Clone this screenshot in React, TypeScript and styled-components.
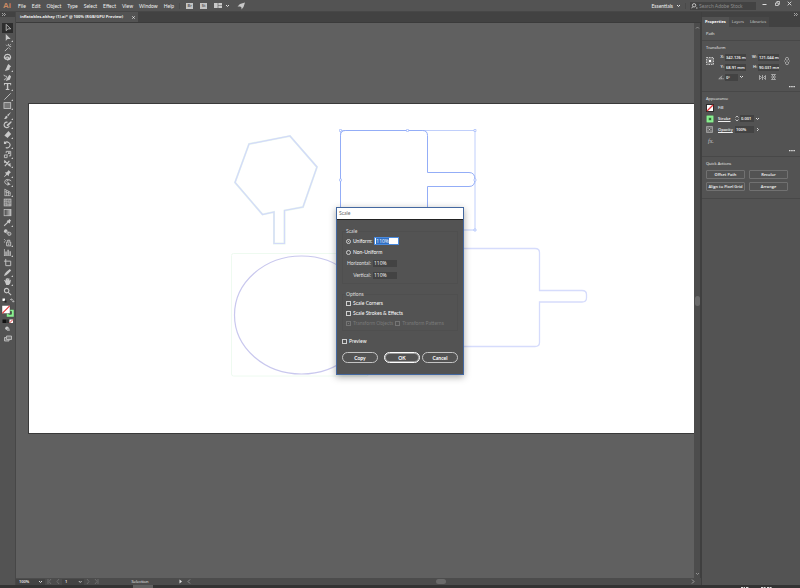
import React, { useEffect, useRef } from "react";
import styled, { createGlobalStyle } from "styled-components";

const GlobalStyle = createGlobalStyle`
  * { box-sizing: border-box; }
  body { margin: 0; background: #606060; overflow: hidden; font-family: Lato, "Open Sans", sans-serif; }
  button, input, select, fieldset, legend { font: inherit; color: inherit; margin: 0; padding: 0; border: 0; background: none; min-width: 0; }
  button { cursor: pointer; }
`;

const Shell = styled.div`
  min-height: 100vh;
  display: grid;
  grid-template-rows: 12px 1fr 3px;
  font-size: 5px;
  line-height: 6px;
  color: #f0f0f0;
`;

/* ---------- top bar ---------- */

const TopBar = styled.header`
  display: flex;
  align-items: center;
  background: #535353;
  border-bottom: 1px solid #474747;
  white-space: nowrap;
`;

const Logo = styled.div`
  width: 15px;
  padding-left: 3px;
  font: 700 8px/10px "Liberation Sans", sans-serif;
  color: #c98a63;
`;

const Menu = styled.nav`
  display: flex;
  gap: 6px;
  padding: 0 5px 0 3px;
  border-right: 1px solid #4a4a4a;
`;

const MenuButton = styled.button`
  line-height: 6px;
  font-size: 5px;
`;

const AppTools = styled.div`
  display: flex;
  align-items: center;
  gap: 7px;
  padding-left: 6px;
`;

const AppBadge = styled.button`
  width: 7px;
  height: 6px;
  background: #c4c4c4;
  color: #535353;
  font-size: 4px;
  line-height: 6px;
  font-weight: 700;
  text-align: center;
`;

const IconButton = styled.button`
  display: flex;
  align-items: center;
  gap: 3px;
`;

const Workspace = styled.div`
  margin-left: auto;
  display: flex;
  align-items: center;
`;

const WorkspaceButton = styled.button`
  display: flex;
  align-items: center;
  gap: 3px;
  padding-right: 4px;
  border-right: 1px solid #4a4a4a;
`;

const SearchBox = styled.label`
  display: flex;
  align-items: center;
  gap: 1px;
  margin-left: 4px;
  padding-left: 1px;
  width: 66px;
  height: 8px;
  background: #434343;
  input { flex: 1; width: 0; line-height: 6px; outline: 0; }
  input::placeholder { color: #8c8c8c; opacity: 1; }
`;

const WindowButtons = styled.div`
  display: flex;
  align-items: center;
  justify-content: space-between;
  width: 30px;
  margin: 0 8px 4px 6px;
`;

/* ---------- main split ---------- */

const Main = styled.main`
  display: grid;
  grid-template-columns: 16px 1fr 99px;
  font-family: "Open Sans", "Noto Sans", sans-serif;
`;

const ToolBar = styled.aside`
  background: #535353;
  border-right: 1px solid #474747;
  display: flex;
  flex-direction: column;
  align-items: center;
  gap: 1px;
`;

const ToolHead = styled.div`
  align-self: stretch;
  height: 10px;
  padding: 1px 0 0 2px;
  background: linear-gradient(#424242 5px, #535353 5px);
  display: flex;
`;

const ToolGroup = styled.div<{ $height: number }>`
  height: ${(p) => p.$height}px;
  display: flex;
  flex-direction: column;
`;

const ToolButton = styled.button<{ $active?: boolean }>`
  flex: 1;
  min-height: 0;
  width: 11px;
  display: flex;
  align-items: center;
  justify-content: center;
  background: ${(p) => (p.$active ? "#2d2d2d" : "transparent")};
  svg { flex: none; }
`;

const Document = styled.section`
  display: grid;
  grid-template-rows: 11px 1fr 7px;
  min-width: 0;
`;

const TabStrip = styled.div`
  display: flex;
  background: #424242;
  border-bottom: 1px solid #3b3b3b;
`;

const DocTab = styled.div`
  display: flex;
  align-items: center;
  gap: 9px;
  padding: 0 3px 0 4px;
  background: #535353;
  font-size: 4px;
  font-weight: 700;
  color: #f0f0f0;
  white-space: nowrap;
`;

const Viewport = styled.div`
  display: grid;
  grid-template-columns: 1fr 7px;
`;

const Canvas = styled.div`
  background: #606060;
  padding: 81px 0 0 13px;
`;

const Artboard = styled.div`
  background: #fff;
  outline: 1px solid #3a3a3a;
  svg { display: block; width: 100%; height: auto; }
`;

const VScroll = styled.div`
  background: #4c4c4c;
  border-right: 1px solid #3f3f3f;
  display: flex;
  flex-direction: column;
  align-items: center;
  justify-content: space-between;
  padding: 2px 0;
`;

const Thumb = styled.div<{ $wide?: boolean }>`
  width: ${(p) => (p.$wide ? 10 : 5)}px;
  height: ${(p) => (p.$wide ? 5 : 10)}px;
  border-radius: 3px;
  background: #6a6a6a;
`;

const StatusBar = styled.footer`
  display: flex;
  align-items: center;
  background: #4c4c4c;
  font-size: 4px;
  line-height: 6px;
  font-weight: 600;
`;

const StatusField = styled.label<{ $width: number }>`
  width: ${(p) => p.$width}px;
  display: flex;
  align-items: center;
  justify-content: space-between;
  padding: 0 2px 0 3px;
  background: #434343;
  input { width: 14px; line-height: 6px; }
`;

const StatusNav = styled.div`
  display: flex;
  align-items: center;
  justify-content: space-around;
  width: 17px;
`;

const StatusText = styled.div`
  width: 78px;
  text-align: center;
  font-weight: 400;
`;

const HScroll = styled.div`
  flex: 1;
  display: flex;
  align-items: center;
  justify-content: space-between;
  padding: 0 6px 0 4px;
`;

const TaskBar = styled.div`
  display: flex;
  justify-content: space-between;
  background: #333;
  padding: 0 27px 0 133px;
  overflow: hidden;
`;

const TaskItem = styled.div`
  width: 20px;
  background: #606060;
`;

/* ---------- properties panel ---------- */

const Panel = styled.aside`
  display: flex;
  flex-direction: column;
  background: #535353;
  border-left: 1px solid #3f3f3f;
  font-size: 4px;
  line-height: 6px;
  font-weight: 600;
`;

const PanelHead = styled.div`
  height: 5px;
  display: flex;
  justify-content: flex-end;
  padding: 1px 2px 0;
  background: #424242;
`;

const PanelTabs = styled.div`
  display: flex;
  height: 10px;
  background: #424242;
`;

const PanelTab = styled.button<{ $active?: boolean }>`
  padding: 0 3px;
  background: ${(p) => (p.$active ? "#535353" : "#484848")};
  color: ${(p) => (p.$active ? "#fff" : "#d4d4d4")};
  font-weight: ${(p) => (p.$active ? 700 : 400)};
`;

const PanelSection = styled.section<{ $height: number }>`
  min-height: ${(p) => p.$height}px;
  padding: 4px 4px 0;
  border-bottom: 1px solid #484848;
`;

const Heading = styled.h2`
  margin: 0;
  font: inherit;
  font-weight: 400;
  color: #f0f0f0;
`;

const TransformGrid = styled.div`
  display: grid;
  grid-template-columns: 11px 1fr 12px;
  align-items: start;
  padding-top: 2px;
  > svg { margin-top: 4px; }
`;

const FieldGrid = styled.div`
  display: grid;
  grid-template-columns: 33px 1fr;
  grid-auto-rows: 8px;
  row-gap: 2px;
`;

const Field = styled.label`
  display: flex;
  align-items: center;
  gap: 1px;
  span, > svg { flex: none; width: 7px; text-align: right; }
  input { flex: none; width: 21px; height: 7px; padding-left: 1px; background: #434343; color: #fff; }
`;

const AngleField = styled(Field)`
  input { width: 13px; }
  > svg:last-child { width: 5px; }
`;

const FlipTools = styled.div`
  display: flex;
  align-items: center;
  gap: 5px;
  padding-left: 9px;
`;

const MoreButton = styled.button`
  display: block;
  margin: 3px 1px 0 auto;
  height: 5px;
  svg { display: block; }
`;

const StyleRow = styled.div`
  display: grid;
  grid-template-columns: 12px 17px 1fr;
  align-items: center;
  height: 11px;
`;

const PaintSwatch = styled.button`
  width: 8px;
  height: 8px;
  svg { display: block; }
`;

const TextLink = styled.a`
  color: #f0f0f0;
  text-decoration: underline;
`;

const NumberBox = styled.div<{ $lead?: boolean }>`
  display: flex;
  align-items: center;
  gap: 1px;
  input { width: ${(p) => (p.$lead ? 14 : 19)}px; height: 7px; padding-left: 1px; background: #434343; color: #fff; }
`;

const Fx = styled.button`
  display: block;
  margin: 2px 0 0 2px;
  height: 8px;
  font: italic 6px/8px "Liberation Serif", serif;
  color: #c8c8c8;
`;

const ActionGrid = styled.div`
  display: grid;
  grid-template-columns: 1fr 1fr;
  gap: 3px 4px;
  padding: 3px 8px 0 0;
`;

const ActionButton = styled.button`
  height: 9px;
  border: 1px solid #717171;
  border-radius: 1px;
  color: #f4f4f4;
  white-space: nowrap;
  line-height: 6px;
`;

/* ---------- scale dialog ---------- */

const Dialog = styled.form`
  position: absolute;
  top: 207px;
  left: calc(50% - 64px);
  width: 128px;
  border: 1px solid #4468a0;
  background: #535353;
  box-shadow: 0 2px 7px rgba(0, 0, 0, 0.35);
  font-size: 5px;
  line-height: 6px;
`;

const DialogTitle = styled.h1`
  margin: 0;
  padding-left: 2px;
  height: 12px;
  background: #fff;
  border-bottom: 1px solid #222;
  color: #666;
  font: inherit;
  line-height: 11px;
`;

const DialogBody = styled.div`
  padding: 8px 5px 11px;
`;

const Group = styled.fieldset`
  && {
    display: flow-root;
    border: 1px solid #4f4f4f;
    padding: 1px 3px 2px;
    margin-bottom: 7px;
  }
  legend { color: #dcdcdc; line-height: 6px; }
`;

const FormRow = styled.div<{ $tall?: boolean }>`
  display: flex;
  align-items: center;
  gap: 2px;
  height: ${(p) => (p.$tall ? 12 : 10)}px;
`;

const Choice = styled.label<{ $muted?: boolean }>`
  display: flex;
  align-items: center;
  gap: 2px;
  white-space: nowrap;
  color: ${(p) => (p.$muted ? "#7a7a7a" : "#fff")};
  input {
    appearance: none;
    flex: none;
    width: 5px;
    height: 5px;
    border: 1px solid ${(p) => (p.$muted ? "#757575" : "#cfcfcf")};
  }
  input[type="radio"] { border-radius: 50%; }
  input:checked { background: ${(p) => (p.$muted ? "#757575" : "#f0f0f0")}; background-clip: content-box; padding: 1px; }
`;

const AxisLabel = styled.label`
  width: 25px;
  text-align: right;
  color: #e0e0e0;
`;

const ScaleInput = styled.input<{ $focus?: boolean }>`
  && {
    width: ${(p) => (p.$focus ? 25 : 24)}px;
    height: ${(p) => (p.$focus ? 8 : 7)}px;
    padding-left: 1px;
    background: ${(p) => (p.$focus ? "#fff" : "#434343")};
    color: ${(p) => (p.$focus ? "#222" : "#fff")};
    outline: 0;
    border: ${(p) => (p.$focus ? "1px solid #4a8ade" : "0")};
    font-family: "Open Sans", "Noto Sans", sans-serif;
    line-height: 6px;
  }
  &::selection { background: #2f6fc4; color: #fff; }
`;

const DialogActions = styled.div`
  display: flex;
  gap: 2px;
  padding-top: 8px;
  button:first-child { margin-right: auto; }
`;

const PillButton = styled.button<{ $primary?: boolean }>`
  width: 36px;
  height: 11px;
  border: 1px solid ${(p) => (p.$primary ? "#fff" : "#c4c4c4")};
  border-radius: 6px;
  box-shadow: ${(p) => (p.$primary ? "inset 0 0 0 1px #999" : "none")};
  color: #fff;
  font-weight: 700;
  line-height: 6px;
`;

const PreviewRow = styled.div`
  height: 6px;
  display: flex;
  align-items: center;
`;

/* ---------- icons ---------- */

type Glyph = { name: string; art: React.ReactNode; corner?: boolean };

const S = (d: string, w = 1) => <path d={d} fill="none" stroke="#c8c8c8" strokeWidth={w} />;
const F = (d: string) => <path d={d} fill="#c8c8c8" />;

const toolGroups: { height: number; tools: Glyph[] }[] = [
  {
    height: 39,
    tools: [
      { name: "Selection", art: S("M3.500 1.500v7l2-2h3z", 0.9) },
      { name: "Direct Selection", art: F("M3 1v8l2-2.200h3.500z"), corner: true },
      { name: "Magic Wand", art: S("M2 9l4-4M6 1v2M9 4H7M3.500 2l1.200 1.200M8.500 1.500L7 3M8 7L7 6") },
      { name: "Lasso", art: <>{S("M3 7C0 5 2 1.500 5 1.500S10 5 7 7C5 8 3 7 3 5.500S7 4 7 6", 1.3)}{F("M5 4v5l1.500-1.500H8.500z")}</> },
    ],
  },
  {
    height: 76,
    tools: [
      { name: "Pen", art: F("M6 1l3 3-1.500 1L7 7.500 2 9l2-4 1-2.500z"), corner: true },
      { name: "Curvature", art: <>{F("M7 2l2 2-1.500 3.500L3 9l2-4z")}{S("M1 2c0 3 4 0 3 3S1 6 1.500 8")}</> },
      { name: "Type", art: F("M1 1h8v2.500H8V2.200H5.800v5.600H7V9H3V7.800h1.200V2.200H2v1.300H1z"), corner: true },
      { name: "Line Segment", art: S("M1.500 8.500l7-7"), corner: true },
      { name: "Rectangle", art: <rect x="1" y="1.800" width="7.500" height="6.500" fill="#777" stroke="#c8c8c8" strokeWidth=".9" />, corner: true },
      { name: "Paintbrush", art: F("M9 1L4.500 4.500l1.200 1.200zM4 5.200L5 6.300C5 8 3.500 9 1 9c1.500-1 1-3.500 3-3.800z"), corner: true },
      { name: "Shaper", art: <>{S("M5 2.500a3 3 0 1 0 2 4", 1.200)}{F("M9 1L4.500 5 4 7l2-.5L9.600 2.500z")}</>, corner: true },
      { name: "Eraser", art: F("M6 1l3 3.500L5 9 1.500 6z"), corner: true },
    ],
  },
  {
    height: 57,
    tools: [
      { name: "Rotate", art: <>{S("M2 3.500A3.200 3.200 0 1 1 3 8.300", 1.200)}{F("M1 1v3.500h3z")}</>, corner: true },
      { name: "Scale", art: <>{S("M1.500 5.500h3v3h-3zM3.500 3.500v-2h5v5h-2M5 5l2-2M5.500 3h1.500v1.500", 1)}</>, corner: true },
      { name: "Width", art: <>{S("M1 2c4 1 3 5 8 6M2 8l5-6", 1.200)}{F("M2 1l2 3-3 .5zM6 5l3 0-2 3z")}</>, corner: true },
      { name: "Puppet Warp", art: F("M6 1l3 3-1.300.3L6.500 6l-.3 2L4.500 6.500 1.500 9 1 8.500 3.500 5.500 2 4l2-.3L5.700 2.300z"), corner: true },
      { name: "Shape Builder", art: <>{S("M6 2a2.700 2.700 0 1 0-1 5M4 4a2.700 2.700 0 0 1 5-.5")}{F("M5 4v5l1.500-1.500H8.500z")}</>, corner: true },
      { name: "Perspective Grid", art: S("M2 1v8M2 1.500l6 3M2 4l6 2M2 8.500h6V4.500M4 2.500v6M6 3.500v5", 0.8), corner: true },
    ],
  },
  {
    height: 39,
    tools: [
      { name: "Mesh", art: <><rect x="1.200" y="1.200" width="7.600" height="7.600" fill="#777" stroke="#c8c8c8" strokeWidth=".8" />{S("M1 4c3-2 5 2 8 0M1 7c3-2 5 2 8 0M4 1c-2 3 1 5 0 8M7 1c-2 3 1 5 0 8", 0.5)}</> },
      { name: "Gradient", art: <><defs><linearGradient id="toolGradient"><stop stopColor="#444" /><stop offset="1" stopColor="#bbb" /></linearGradient></defs><rect x="1.200" y="1.600" width="7.600" height="7" fill="url(#toolGradient)" stroke="#c8c8c8" strokeWidth=".8" /></> },
      { name: "Eyedropper", art: <>{F("M7 1l2 2-1.500 1.500.5.5-1 1L4 3.500l1-1 .5.500z")}{S("M5.500 4.500L2 8l-.7.8", 1.300)}</>, corner: true },
      { name: "Blend", art: <><circle cx="3" cy="3.500" r="2" fill="#c8c8c8" /><circle cx="5" cy="5" r="1.800" fill="#969696" /><circle cx="7" cy="6.500" r="1.800" fill="#777" stroke="#c8c8c8" strokeWidth=".9" /></> },
    ],
  },
  {
    height: 19,
    tools: [
      { name: "Symbol Sprayer", art: <>{S("M4 4.500h4.500v4.200H4zM5 4V2.500h2.500V4", 1)}{F("M1 1h1v1H1zM2.500 2.500h1v1h-1zM1 4h1v1H1zM5.500 6H7v1.500H5.500z")}</>, corner: true },
      { name: "Column Graph", art: F("M1 1h.8v7.200H9V9H1zM2.600 4H4v4H2.600zM4.900 2h1.400v6H4.900zM7.200 3.500h1.400V8H7.200z"), corner: true },
    ],
  },
  {
    height: 38,
    tools: [
      { name: "Artboard", art: S("M1 3.500h7.500v5h-5.500V1", 1) },
      { name: "Slice", art: F("M7.500 1L9 2.800 5.500 6.500 3.500 8 1 9l1-2.500L3.500 4.500z"), corner: true },
      { name: "Hand", art: F("M2 5L1 3.800l1-.5 1 1V2h1v2V1h1.200v3L6 1.500h1V4.500l.8-1.500.9.300L8 7 6.500 9h-3z"), corner: true },
      { name: "Zoom", art: S("M6.500 4a2.500 2.500 0 1 1-5 0 2.500 2.500 0 0 1 5 0zM5.800 6L9 9", 1.200) },
    ],
  },
];

const ToolIcon = ({ art, corner }: { art: React.ReactNode; corner?: boolean }) => (
  <svg width="10" height="9" viewBox="0 0 11 10">
    {art}
    {corner && <path d="M11 8v2H9z" fill="#d0d0d0" />}
  </svg>
);

const Chevron = ({ color = "#e0e0e0" }: { color?: string }) => (
  <svg width="5" height="4" viewBox="0 0 5 4">
    <path d="M1 1l1.500 1.500L4 1" fill="none" stroke={color} strokeWidth="1" />
  </svg>
);

const Arrow = ({ d, color = "#707070" }: { d: string; color?: string }) => (
  <svg width="5" height="5" viewBox="0 0 5 5">
    <path d={d} fill="none" stroke={color} strokeWidth=".9" />
  </svg>
);

const Play = () => (
  <svg width="4" height="5" viewBox="0 0 4 5">
    <path d="M.5 .5v4l2.500-2z" fill="#e0e0e0" />
  </svg>
);

const Collapse = () => (
  <svg width="4" height="3" viewBox="0 0 4 3">
    <path d="M0 0l1.500 1.500L0 3M2 0l1.500 1.500L2 3" fill="none" stroke="#ccc" strokeWidth=".7" />
  </svg>
);

const More = () => (
  <svg width="6" height="3" viewBox="0 0 6 3">
    <path d="M0 1h1.500v1.300H0zM2.200 1h1.500v1.300H2.200zM4.400 1h1.500v1.300H4.400z" fill="#e0e0e0" />
  </svg>
);

const NonePaint = () => (
  <svg width="8" height="8" viewBox="0 0 8 8">
    <rect x=".5" y=".5" width="7" height="7" fill="#fff" stroke="#2c2c2c" />
    <path d="M1 7l6-6" stroke="#e3363a" strokeWidth="1.200" />
  </svg>
);

const StrokePaint = () => (
  <svg width="8" height="8" viewBox="0 0 8 8">
    <rect width="8" height="8" fill="#444" />
    <rect x=".5" y=".5" width="7" height="7" fill="#8af090" />
    <rect x="2.500" y="2.500" width="3" height="3" fill="#5cba62" />
    <rect x="3.300" y="3.300" width="1.500" height="1.500" fill="#1c2c1e" />
  </svg>
);

const ColorControls = () => (
  <svg width="14" height="46" viewBox="1 297 14 46" aria-label="Fill and stroke">
    <path d="M2.500 298.500h2.500v2.500H2.500z" fill="#fff" />
    <path d="M4.500 300.500h2v2h-2z" fill="#222" />
    <path d="M10.500 299.500h1.500c1 0 1.300.5 1.300 2.500M11.500 298.500l-1 1 1 1M12.300 301l1 1.200 1-1.200" fill="none" stroke="#c8c8c8" strokeWidth=".7" />
    <rect x="6.500" y="309.500" width="7.500" height="7.500" fill="#8af090" stroke="#444" strokeWidth=".4" />
    <rect x="8.800" y="311.500" width="2.800" height="2.800" fill="#4e4e4e" stroke="#2c4c2e" strokeWidth=".5" />
    <rect x="2" y="305.500" width="8" height="8" fill="#fff" stroke="#444" strokeWidth=".4" />
    <path d="M2.300 313.300l7.400-7.500" stroke="#e3363a" strokeWidth="1.200" />
    <rect x="2.500" y="319.500" width="3.500" height="3.500" fill="#111" />
    <rect x="6" y="319.500" width="3" height="3.500" fill="#333" />
    <rect x="9.500" y="319.500" width="3.500" height="3.500" fill="#fff" />
    <path d="M9.500 323l3.500-3.500" stroke="#e3363a" strokeWidth="1" />
    <circle cx="7" cy="328.300" r="1.800" fill="#c8c8c8" />
    <rect x="7" y="328.500" width="2.800" height="2.500" fill="#9a9a9a" />
    <path d="M6.500 336h5v3.500h-5zM6 337.500H4.500v3.500H9v-1" fill="#777" stroke="#c8c8c8" strokeWidth=".8" />
  </svg>
);

const Artwork = () => (
  <svg viewBox="29 104 665 329" fill="none" role="img" aria-label="Artboard shapes">
    <path d="M249 144l41-8 27 31-14 40-18.500 3.500v33h-10.500V212l-11.500 2.500-27.500-32z" stroke="#e6f5ee" strokeWidth="2" />
    <path d="M249 144l41-8 27 31-14 40-18.500 3.500v33h-10.500V212l-11.500 2.500-27.500-32z" stroke="#d3daf9" strokeWidth="1.200" />
    <rect x="231.500" y="253.500" width="137" height="122.500" rx="2" stroke="#eefaf0" />
    <ellipse cx="301.500" cy="315" rx="67" ry="59" stroke="#c9c8ee" strokeWidth="1.200" />
    <path d="M400 248.500h135q4.500 0 4.500 4v38H582q4.500 0 4.500 4v3.500q0 4-4.500 4h-42.500v40.500q0 4-4.500 4H400z" stroke="#d6dcfc" strokeWidth="1.300" />
    <path d="M340.500 130.500h134.500v99.500H340.500z" stroke="#b9c9fb" strokeWidth=".9" />
    <path d="M345.500 130.500h77q5 0 5 5v37H469q6 0 6 7t-6 7h-41.500V229H340.500V135.500q0-5 5-5z" stroke="#93adf7" />
    <g fill="#fff" stroke="#a5bafa" strokeWidth=".7">
      <path d="M339.500 129.500h2v2h-2zM406.500 129.500h2v2h-2zM474 129.500h2v2h-2zM339.500 179h2v2h-2zM474 179h2v2h-2zM474 229h2v2h-2z" />
    </g>
  </svg>
);

/* ---------- page ---------- */

const menus = ["File", "Edit", "Object", "Type", "Select", "Effect", "View", "Window", "Help"];
const actions = ["Offset Path", "Recolor", "Align to Pixel Grid", "Arrange"];
const positions = [
  { label: "X:", value: "342.126 mm" },
  { label: "W:", value: "121.044 mm" },
  { label: "Y:", value: "68.91 mm" },
  { label: "H:", value: "90.031 mm" },
];

function ScaleDialog() {
  const uniform = useRef<HTMLInputElement>(null);
  useEffect(() => {
    uniform.current?.focus();
    uniform.current?.select();
  }, []);
  return (
    <Dialog onSubmit={(e) => e.preventDefault()}>
      <DialogTitle>Scale</DialogTitle>
      <DialogBody>
        <Group>
          <legend>Scale</legend>
          <FormRow $tall>
            <Choice><input type="radio" name="mode" defaultChecked />Uniform:</Choice>
            <ScaleInput ref={uniform} $focus aria-label="Uniform scale" defaultValue="110%" />
          </FormRow>
          <FormRow>
            <Choice><input type="radio" name="mode" />Non-Uniform</Choice>
          </FormRow>
          <FormRow $tall>
            <AxisLabel htmlFor="scale-h">Horizontal:</AxisLabel>
            <ScaleInput id="scale-h" defaultValue="110%" />
          </FormRow>
          <FormRow $tall>
            <AxisLabel htmlFor="scale-v">Vertical:</AxisLabel>
            <ScaleInput id="scale-v" defaultValue="110%" />
          </FormRow>
        </Group>
        <Group>
          <legend>Options</legend>
          <FormRow><Choice><input type="checkbox" />Scale Corners</Choice></FormRow>
          <FormRow><Choice><input type="checkbox" />Scale Strokes &amp; Effects</Choice></FormRow>
          <FormRow>
            <Choice $muted><input type="checkbox" defaultChecked disabled />Transform Objects</Choice>
            <Choice $muted><input type="checkbox" disabled />Transform Patterns</Choice>
          </FormRow>
        </Group>
        <PreviewRow><Choice><input type="checkbox" />Preview</Choice></PreviewRow>
        <DialogActions>
          <PillButton type="button">Copy</PillButton>
          <PillButton type="submit" $primary>OK</PillButton>
          <PillButton type="button">Cancel</PillButton>
        </DialogActions>
      </DialogBody>
    </Dialog>
  );
}

function PropertiesPanel() {
  return (
    <Panel>
      <PanelHead><Collapse /></PanelHead>
      <PanelTabs>
        <PanelTab $active>Properties</PanelTab>
        <PanelTab>Layers</PanelTab>
        <PanelTab>Libraries</PanelTab>
      </PanelTabs>
      <PanelSection $height={14}><Heading>Path</Heading></PanelSection>
      <PanelSection $height={51}>
        <Heading>Transform</Heading>
        <TransformGrid>
          <svg width="8" height="8" viewBox="0 0 8 8">
            <path d="M.5.5h7v7h-7z" fill="#777" stroke="#ddd" strokeWidth=".8" strokeDasharray="1.500 1" />
            <path d="M3 3h2v2H3z" fill="#fff" />
          </svg>
          <FieldGrid>
            {positions.map((p) => (
              <Field key={p.label}><span>{p.label}</span><input defaultValue={p.value} /></Field>
            ))}
            <AngleField>
              <svg width="8" height="5" viewBox="0 0 8 5"><path d="M6 .5L2 4h4.500M4.500 2l1 2M7.500 3.500v1" fill="none" stroke="#ccc" strokeWidth=".7" /></svg>
              <input aria-label="Rotate" defaultValue="0°" />
              <Chevron />
            </AngleField>
            <FlipTools>
              <svg width="7" height="5" viewBox="0 0 7 5"><path d="M3.500 0v5M.5.500v4l2-2zM6.500.500v4l-2-2z" fill="none" stroke="#ccc" strokeWidth=".7" /></svg>
              <svg width="5" height="6" viewBox="0 0 5 6"><path d="M0 3h5M.5.500h4l-2 2zM.5 5.500h4l-2-2z" fill="none" stroke="#ccc" strokeWidth=".7" /></svg>
            </FlipTools>
          </FieldGrid>
          <svg width="6" height="8" viewBox="0 0 6 8"><path d="M1.500 3V1.500q0-1 1.500-1t1.500 1V3M1.500 5v1.500q0 1 1.500 1t1.500-1V5M3 2.500v3M0 4h1M5 4h1" fill="none" stroke="#bbb" strokeWidth=".8" /></svg>
        </TransformGrid>
        <MoreButton aria-label="More transform options"><More /></MoreButton>
      </PanelSection>
      <PanelSection $height={65}>
        <Heading>Appearance</Heading>
        <StyleRow><PaintSwatch aria-label="Fill color"><NonePaint /></PaintSwatch><span>Fill</span></StyleRow>
        <StyleRow>
          <PaintSwatch aria-label="Stroke color"><StrokePaint /></PaintSwatch>
          <TextLink href="#stroke">Stroke</TextLink>
          <NumberBox $lead>
            <svg width="4" height="7" viewBox="0 0 4 7"><path d="M.5 2.500L2 1l1.500 1.500M.5 4.500L2 6l1.500-1.500" fill="none" stroke="#ddd" strokeWidth=".8" /></svg>
            <input aria-label="Stroke weight" defaultValue="0.001" />
            <Chevron />
          </NumberBox>
        </StyleRow>
        <StyleRow>
          <svg width="7" height="7" viewBox="0 0 7 7"><path d="M.5.500h6v6h-6z" fill="#666" stroke="#aaa" strokeWidth=".8" /><path d="M1.500 1.500h1v1h-1zM4.500 1.500h1v1h-1zM3 3h1v1H3zM1.500 4.500h1v1h-1zM4.500 4.500h1v1h-1z" fill="#ccc" /></svg>
          <TextLink href="#opacity">Opacity</TextLink>
          <NumberBox>
            <input aria-label="Opacity" defaultValue="100%" />
            <Arrow d="M2 1l1.500 1.500L2 4" color="#ddd" />
          </NumberBox>
        </StyleRow>
        <Fx>fx.</Fx>
        <MoreButton aria-label="More appearance options"><More /></MoreButton>
      </PanelSection>
      <PanelSection $height={42}>
        <Heading>Quick Actions</Heading>
        <ActionGrid>
          {actions.map((a) => <ActionButton key={a}>{a}</ActionButton>)}
        </ActionGrid>
      </PanelSection>
    </Panel>
  );
}

export default function App() {
  return (
    <>
      <GlobalStyle />
      <Shell>
        <TopBar>
          <Logo>Ai</Logo>
          <Menu>{menus.map((m) => <MenuButton key={m}>{m}</MenuButton>)}</Menu>
          <AppTools>
            <AppBadge>Br</AppBadge>
            <AppBadge>St</AppBadge>
            <IconButton aria-label="Arrange documents">
              <svg width="8" height="5" viewBox="0 0 8 5"><path d="M0 0h3.700v5H0zM4.300 0H8v2.200H4.300zM4.300 2.800H8V5H4.300z" fill="#c8c8c8" /></svg>
              <Chevron />
            </IconButton>
            <IconButton aria-label="GPU performance">
              <svg width="8" height="8" viewBox="0 0 8 8"><path d="M8 .5L6.500 5 4.500 7.500V5.500L3.200 4.500.5 4.500 3 2z" fill="#c8c8c8" /></svg>
            </IconButton>
          </AppTools>
          <Workspace>
            <WorkspaceButton>Essentials <Chevron /></WorkspaceButton>
            <SearchBox>
              <svg width="7" height="6" viewBox="0 0 7 6"><path d="M4.800 2.300a1.700 1.700 0 1 1-3.400 0 1.700 1.700 0 0 1 3.400 0zM2 3.500L.5 5.300M5 5h1.500" fill="none" stroke="#ccc" strokeWidth=".9" /></svg>
              <input aria-label="Search Adobe Stock" placeholder="Search Adobe Stock" />
            </SearchBox>
            <WindowButtons>
              <IconButton aria-label="Minimize"><svg width="5" height="5" viewBox="0 0 5 5"><path d="M.5 3.500h4" stroke="#ddd" /></svg></IconButton>
              <IconButton aria-label="Restore"><svg width="5" height="5" viewBox="0 0 5 5"><path d="M.5 2h2.800v2.500H.5zM1.800 2V.5h2.800v2.800H3.500" fill="none" stroke="#ddd" strokeWidth=".8" /></svg></IconButton>
              <IconButton aria-label="Close"><svg width="5" height="5" viewBox="0 0 5 5"><path d="M.7.700l3.600 3.600M4.300.700L.7 4.300" stroke="#ddd" strokeWidth=".9" /></svg></IconButton>
            </WindowButtons>
          </Workspace>
        </TopBar>

        <Main>
          <ToolBar>
            <ToolHead><Collapse /></ToolHead>
            {toolGroups.map((g, i) => (
              <ToolGroup key={i} $height={g.height}>
                {g.tools.map((t) => (
                  <ToolButton key={t.name} aria-label={t.name} $active={t.name === "Selection"}>
                    <ToolIcon art={t.art} corner={t.corner} />
                  </ToolButton>
                ))}
              </ToolGroup>
            ))}
            <ColorControls />
          </ToolBar>

          <Document>
            <TabStrip>
              <DocTab>
                inflatables-abhay (1).ai* @ 100% (RGB/GPU Preview)
                <IconButton aria-label="Close document"><svg width="3" height="3" viewBox="0 0 3 3"><path d="M.3.300l2.400 2.400M2.700.300L.3 2.700" stroke="#eee" strokeWidth=".8" /></svg></IconButton>
              </DocTab>
            </TabStrip>
            <Viewport>
              <Canvas><Artboard><Artwork /></Artboard></Canvas>
              <VScroll>
                <Arrow d="M1 3.500L2.500 2 4 3.500" color="#999" />
                <Thumb />
                <Arrow d="M1 2l1.500 1.500L4 2" color="#999" />
              </VScroll>
            </Viewport>
            <StatusBar>
              <StatusField $width={29}><input aria-label="Zoom level" defaultValue="100%" /><Chevron /></StatusField>
              <StatusNav><Arrow d="M1 0v5M4 0L2 2.500 4 5" /><Arrow d="M4 0L2 2.500 4 5" /></StatusNav>
              <StatusField $width={22}><input aria-label="Artboard number" defaultValue="1" /><Chevron /></StatusField>
              <StatusNav><Arrow d="M1 0l2 2.500L1 5" /><Arrow d="M1 0l2 2.500L1 5M4 0v5" /></StatusNav>
              <StatusText>Selection</StatusText>
              <IconButton aria-label="Status options"><Play /></IconButton>
              <HScroll>
                <Arrow d="M3 .5L1 2.500 3 4.500" color="#999" />
                <Thumb $wide />
                <Arrow d="M2 .5l2 2-2 2" color="#aaa" />
              </HScroll>
            </StatusBar>
          </Document>

          <PropertiesPanel />
        </Main>

        <TaskBar>
          <TaskItem />
          <svg width="33" height="3" viewBox="0 0 33 3"><path d="M1 2.500h4M6 2.500h3M21 2.500h5M27 2.500h5" stroke="#ddd" strokeWidth="1" strokeDasharray="2 .6" /></svg>
        </TaskBar>
      </Shell>
      <ScaleDialog />
    </>
  );
}
